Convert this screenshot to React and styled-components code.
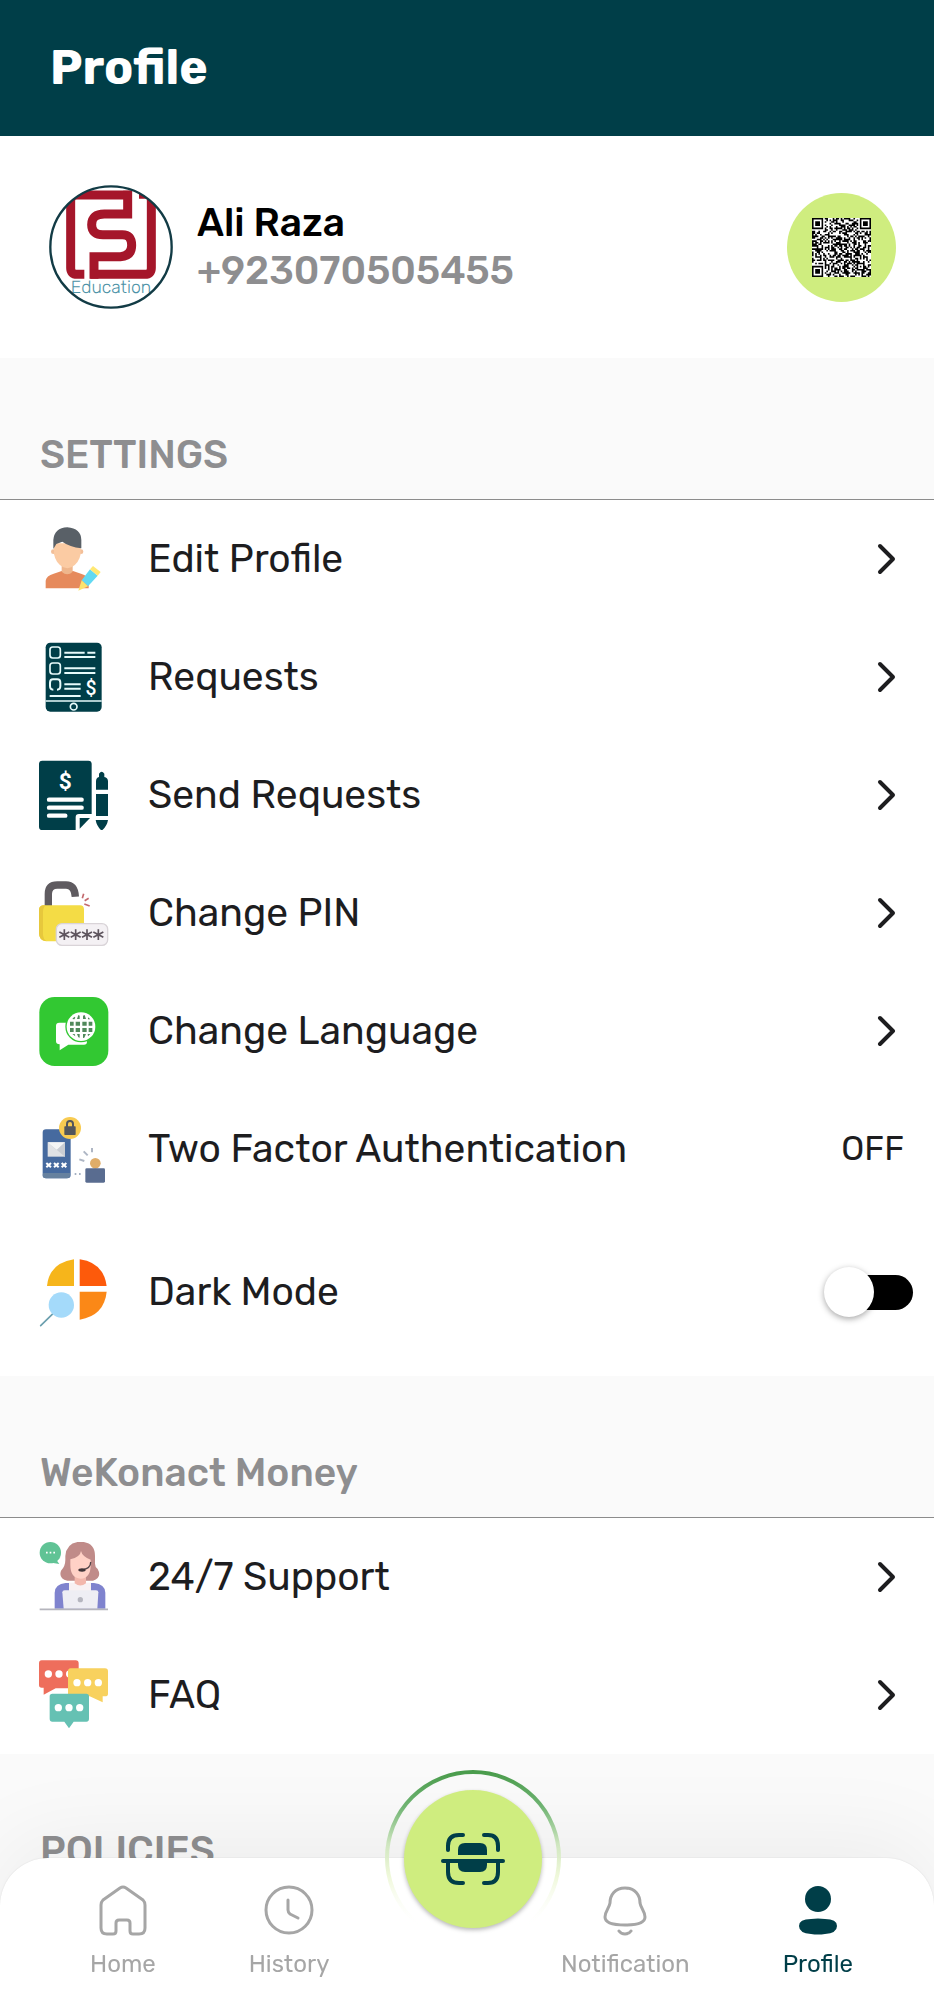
import React from "react";
import styled, { createGlobalStyle } from "styled-components";

const GlobalStyle = createGlobalStyle`
  * { box-sizing: border-box; }
  body {
    margin: 0;
    background: #fafafa;
    color: #1d1d1f;
    font-family: Rubik, Roboto, "Liberation Sans", sans-serif;
  }
  button { font: inherit; color: inherit; border: 0; background: none; padding: 0; cursor: pointer; }
  a { color: inherit; text-decoration: none; }
`;

const teal = "#003e48";
const lime = "#cfed7f";
const muted = "#8e8e90";

const Page = styled.div`
  min-height: 100vh;
  padding-bottom: 110px;
`;

const Header = styled.header`
  display: flex;
  align-items: center;
  height: 136px;
  padding: 0 50px;
  background: ${teal};
`;

const Title = styled.h1`
  margin: 0;
  color: #fff;
  font-size: 48px;
  line-height: 60px;
  font-weight: 700;
`;

const Account = styled.section`
  display: flex;
  align-items: center;
  gap: 24px;
  height: 222px;
  padding: 0 38px 0 49px;
  background: #fff;
`;

const Avatar = styled.svg`
  flex: none;
  width: 124px;
  height: 124px;
`;

const Person = styled.div`
  flex: 1;
  font-size: 39px;
  line-height: 48px;
  font-weight: 500;
`;

const Name = styled.div`
  color: #000;
`;

const Phone = styled.div`
  color: ${muted};
`;

const QrButton = styled.button`
  display: grid;
  place-items: center;
  width: 109px;
  height: 109px;
  border-radius: 50%;
  background: ${lime};
`;

const SectionTitle = styled.h2`
  display: flex;
  align-items: flex-end;
  height: 142px;
  margin: 0;
  padding: 0 40px 20px;
  border-bottom: 1px solid ${(p) => (p.$plain ? "transparent" : "#8c8c8c")};
  color: ${muted};
  font-size: 39px;
  line-height: 48px;
  font-weight: 500;
`;

const List = styled.div`
  background: #fff;
`;

const Row = styled.div`
  display: flex;
  align-items: center;
  gap: 39px;
  width: 100%;
  height: ${(p) => (p.$tall ? 168 : 118)}px;
  padding: 0 ${(p) => p.$end || 38}px 0 39px;
  text-align: left;
`;

const Icon = styled.svg`
  flex: none;
  width: 70px;
  height: 70px;
`;

const RowLabel = styled.span`
  flex: 1;
  font-size: 39px;
  line-height: 48px;
`;

const RowValue = styled.span`
  font-size: 34px;
  line-height: 40px;
`;

const ChevronSvg = styled.svg`
  flex: none;
  width: 20px;
  height: 32px;
`;

const Switch = styled.input`
  appearance: none;
  position: relative;
  flex: none;
  width: 89px;
  height: 50px;
  margin: 0;
  cursor: pointer;
  &::before {
    content: "";
    position: absolute;
    inset: 8px 0 7px 14px;
    border-radius: 18px;
    background: #000;
  }
  &::after {
    content: "";
    position: absolute;
    top: 0;
    left: 0;
    width: 50px;
    height: 50px;
    border-radius: 50%;
    background: #fff;
    box-shadow: 0 2px 6px rgba(0, 0, 0, 0.35);
  }
  &:checked::after { left: 39px; }
`;

const TabBar = styled.nav`
  position: fixed;
  left: 0;
  right: 0;
  bottom: 0;
  display: flex;
  justify-content: space-between;
  height: 149px;
  padding: 25px 81px 0 90px;
  border-radius: 48px 48px 0 0;
  background: #fff;
  box-shadow: 0 0 2px rgba(0, 0, 0, 0.12), 0 -16px 90px rgba(0, 0, 0, 0.06);
`;

const TabGroup = styled.div`
  display: flex;
  align-items: flex-start;
  gap: 93px;
`;

const Tab = styled.a`
  display: flex;
  flex-direction: column;
  align-items: center;
  gap: 11px;
  color: ${(p) => (p.$active ? teal : "#a6a6a6")};
  font-size: 24px;
  line-height: 32px;
`;

const TabIcon = styled.svg`
  width: 54px;
  height: 54px;
`;

const ScanButton = styled.button`
  position: absolute;
  top: -88px;
  left: 50%;
  margin-left: -82px;
  width: 176px;
  height: 176px;
  border-radius: 50%;
`;

const ScanSvg = styled.svg`
  display: block;
  width: 100%;
  height: 100%;
  overflow: visible;
`;

const ScanDisc = styled.circle`
  fill: ${lime};
  filter: drop-shadow(0 2px 2px rgba(0, 0, 0, 0.28));
`;

const Chevron = () => (
  <ChevronSvg viewBox="0 0 20 32" fill="none" stroke="#1d1d1f" strokeWidth="4" strokeLinecap="round" strokeLinejoin="round" aria-hidden="true">
    <path d="M4 3 17 16 4 29" />
  </ChevronSvg>
);

const QR_SIZE = 37;

function buildQr() {
  const finders = [[0, 0], [QR_SIZE - 7, 0], [0, QR_SIZE - 7]];
  let seed = 9230705;
  let d = "";
  for (let y = 0; y < QR_SIZE; y++) {
    for (let x = 0; x < QR_SIZE; x++) {
      seed = (seed * 1103515245 + 12345) % 2147483648;
      let on = (seed >> 12) % 100 < 52;
      finders.forEach(([fx, fy]) => {
        const ring = Math.max(Math.abs(x - fx - 3), Math.abs(y - fy - 3));
        if (ring <= 4) on = ring === 3 || ring <= 1;
      });
      const align = Math.max(Math.abs(x - 30), Math.abs(y - 30));
      if (align <= 2) on = align !== 1;
      if (on) d += `M${x} ${y}h1v1h-1z`;
    }
  }
  return d;
}

const qrPath = buildQr();

const QrCode = () => (
  <svg width="59" height="59" viewBox="0 0 37 37" aria-hidden="true">
    <path d="M0 0h37v37H0z" fill="#fff" />
    <path d={qrPath} fill="#000" />
  </svg>
);

const AvatarLogo = () => (
  <Avatar viewBox="56 43 372 372" role="img" aria-label="Education logo">
    <defs>
      <clipPath id="avatarClip"><circle cx="242" cy="229" r="183" /></clipPath>
    </defs>
    <circle cx="242" cy="229" r="183" fill="#fff" />
    <g clipPath="url(#avatarClip)">
      <g fill="none" stroke="#a5162a" strokeWidth="27">
        <path d="M292 60V130H222Q184 130 184 162T222 192H276Q304 192 304 224T270 258H191V324" />
        <path d="M305 73H140Q121 73 121 92V292Q121 311 140 311H162" />
        <path d="M326 71H345Q363 71 363 90V292Q363 311 344 311H180" />
      </g>
      <text x="242" y="368" textAnchor="middle" fontFamily="Rubik, Lato, sans-serif" fontWeight="300" fontSize="53" fill="#4c92a6" textRendering="geometricPrecision">Education</text>
    </g>
    <circle cx="242" cy="229" r="182" fill="none" stroke="#123b45" strokeWidth="7" />
  </Avatar>
);

const EditIcon = () => (
  <Icon viewBox="58 70 210 210" aria-hidden="true">
    <path d="M78 263V240Q80 225 102 219L126 211H160L184 219Q206 225 207 240V263Z" fill="#e68a5c" />
    <path d="M126 188H159V213Q143 228 126 213Z" fill="#efb68c" />
    <circle cx="101" cy="153" r="7" fill="#f3bf98" />
    <circle cx="184" cy="153" r="7" fill="#f3bf98" />
    <path d="M103 128H183V160Q178 188 155 200Q143 205 131 200Q108 188 103 160Z" fill="#fbcba3" />
    <path d="M101 145V118Q104 82 143 80Q184 83 185 118V143Q150 139 128 123L110 130Z" fill="#596067" />
    <path d="M186 239 211 206 234 225 205 257Z" fill="#62d9f2" />
    <path d="M211 206 220 196 243 214 234 225Z" fill="#ffe873" />
    <path d="M186 239 205 257 176 270Z" fill="#fbe36f" />
  </Icon>
);

const RequestsIcon = () => (
  <Icon viewBox="58 424 210 210" aria-hidden="true">
    <rect x="78" y="426" width="168" height="207" rx="14" fill={teal} />
    <g fill="none" stroke="#e7fbfb" strokeWidth="5">
      <rect x="91" y="439" width="31" height="33" rx="8" />
      <rect x="91" y="487" width="31" height="33" rx="8" />
      <path d="M101 567Q91 567 91 556V546Q91 536 100 536H113Q122 536 122 546V556Q122 567 112 567" strokeWidth="6" />
      <circle cx="162" cy="618" r="10" />
      <path d="M78 601H246" strokeWidth="4" />
    </g>
    <path d="M134 456H195M203 456H227M134 469H227M134 503H227M134 517H227M134 551H183M134 564H183M90 586H183" stroke="#e7fbfb" strokeWidth="6" />
    <text x="214" y="582" textAnchor="middle" fontFamily="Roboto, sans-serif" fontSize="58" fontWeight="500" fill="#fff">$</text>
  </Icon>
);

const SendIcon = () => (
  <Icon viewBox="58 58 210 210" aria-hidden="true">
    <path d="M68 60H206Q216 60 216 70V220H178Q168 220 168 230V268H68Q58 268 58 258V70Q58 60 68 60Z" fill={teal} />
    <path d="M180 232H211L180 264Z" fill={teal} />
    <path d="M88 177H186M88 201H186M88 225H137" stroke="#fff" strokeWidth="13" strokeLinecap="round" />
    <text x="137" y="146" textAnchor="middle" fontFamily="Roboto, sans-serif" fontSize="68" fontWeight="700" fill="#fff">$</text>
    <path d="M229 147V122Q229 111 238 109V99Q246 88 254 99V109Q265 111 265 122V147ZM229 160H265V226H229ZM228 238H265Q262 257 246 270Q231 257 228 238Z" fill={teal} />
  </Icon>
);

const PinIcon = () => (
  <Icon viewBox="58 412 210 210" aria-hidden="true">
    <path d="M86 496V460Q86 433 113 433H139Q165 433 167 468" fill="none" stroke="#5f5b60" strokeWidth="22" />
    <path d="M70 494H181Q193 494 193 507V590Q193 602 181 602H80Q58 600 58 578V507Q58 496 70 494Z" fill="#f4dc45" />
    <path d="M70 494H78Q70 500 70 514V584Q71 596 80 602Q58 600 58 578V507Q58 496 70 494Z" fill="#e7c83c" />
    <path d="M188 473 192 459M195 480 207 473M194 490 210 496" stroke="#c36a6e" strokeWidth="5" />
    <rect x="110" y="549" width="154" height="65" rx="17" fill="#f4f1f4" stroke="#d9d4d8" strokeWidth="4" />
    {[134, 168, 202, 236].map((x) => (
      <path key={x} d={`M${x} 566V598M${x - 15} 574L${x + 15} 590M${x + 15} 574L${x - 15} 590`} stroke="#5d545d" strokeWidth="5" />
    ))}
  </Icon>
);

const LanguageIcon = () => (
  <Icon viewBox="58 46 210 210" aria-hidden="true">
    <rect x="59" y="49" width="207" height="207" rx="46" fill="#32c832" />
    <path d="M119 126H193Q202 126 202 135V183Q202 192 193 192H146L120 209V191Q109 191 109 182V135Q109 126 119 126Z" fill="#fff" />
    <circle cx="184" cy="138" r="47" fill="#32c832" />
    <circle cx="184" cy="138" r="43" fill="#fff" />
    <path d="M151 123h11v12h-11zM168 123h13v12h-13zM188 123h13v12h-13zM207 123h11v12h-11zM151 142h11v12h-11zM168 142h13v12h-13zM188 142h13v12h-13zM207 142h11v12h-11zM172 115l4-12 4 2v10zM190 105l5-2 4 12h-9zM172 160h8v11l-4-1zM190 160h9l-5 11-4 1zM158 115l6-7 3 3-3 5zM205 110l7 6h-7zM158 160h7l2 7zM204 160h8l-7 7z" fill="#50895b" />
  </Icon>
);

const TwoFactorIcon = () => (
  <Icon viewBox="58 400 210 210" aria-hidden="true">
    <rect x="69" y="446" width="84" height="147" rx="10" fill="#466a9f" />
    <path d="M71 577H151V583Q151 593 141 593H79Q69 593 69 583Z" fill="#66819f" />
    <rect x="84" y="485" width="52" height="43" fill="#e0e2e5" />
    <path d="M84 485H136L110 509Z" fill="#f4f5f5" />
    <path d="M84 485 110 509 136 485V528Z" fill="#c9cdd3" />
    {[87, 110, 133].map((x) => (
      <path key={x} d={`M${x - 7} 547l14 13m0-13l-14 13`} stroke="#fff" strokeWidth="6" />
    ))}
    <circle cx="151" cy="442" r="33" fill="#f8cb51" />
    <rect x="134" y="437" width="34" height="26" rx="2" fill="#52565c" />
    <path d="M142 439V430Q142 421 151 421T160 430V439" fill="none" stroke="#52565c" strokeWidth="6" />
    <path d="M217 515V502M204 524 192 512M194 541 179 536" stroke="#aeb6c4" strokeWidth="6" />
    <path d="M165 580h5M178 580h5" stroke="#8797ae" strokeWidth="5" />
    <circle cx="227" cy="548" r="16" fill="#dfad69" />
    <rect x="197" y="563" width="59" height="43" rx="4" fill="#596c90" />
  </Icon>
);

const DarkModeIcon = () => (
  <Icon viewBox="58 49 210 210" aria-hidden="true">
    <path d="M163 56V136H82Q88 68 163 56Z" fill="#f6b51b" />
    <path d="M180 56Q252 66 261 136H180Z" fill="#fd5a0b" />
    <path d="M180 153H261Q254 224 180 237Z" fill="#fb8817" />
    <path d="M63 255 100 219" stroke="#6b9fae" strokeWidth="5" strokeLinecap="round" />
    <circle cx="125" cy="193" r="38" fill="#a4dafa" />
  </Icon>
);

const SupportIcon = () => (
  <Icon viewBox="58 70 210 210" aria-hidden="true">
    <circle cx="92" cy="102" r="32" fill="#60c395" />
    <path d="M96 132 124 116 111 125 119 136Z" fill="#60c395" />
    <path d="M79 102h5M90 102h5M101 102h5" stroke="#fff" strokeWidth="5" />
    <path d="M183 69Q226 71 226 112V135Q226 145 234 151Q248 176 220 186H143Q116 180 124 156Q137 143 137 124V112Q140 71 183 69Z" fill="#c08b89" />
    <path d="M105 270V222Q106 196 138 193H223Q256 196 257 222V270Z" fill="#7f83ce" />
    <path d="M148 192H214V218H148Z" fill="#f8f1f3" />
    <path d="M165 166H199V194Q182 207 165 194Z" fill="#f3b7ac" />
    <path d="M152 122Q182 115 184 97Q188 114 213 123V139Q213 179 183 180Q152 178 152 139Z" fill="#ffd1c6" />
    <path d="M213 130Q213 149 190 153" fill="none" stroke="#524549" strokeWidth="4" />
    <ellipse cx="187" cy="154" rx="11" ry="5" fill="#403438" />
    <path d="M128 221Q128 215 135 215H229Q236 215 236 221L233 270H132Z" fill="#eeeef4" />
    <circle cx="182" cy="243" r="8" fill="#b5b6bf" />
    <path d="M60 272H265" stroke="#b5b5bd" strokeWidth="5" />
  </Icon>
);

const FaqIcon = () => (
  <Icon viewBox="58 424 210 210" aria-hidden="true">
    <path d="M66 425H168Q177 425 177 434V509H108L72 528V507H66Q58 507 58 499V434Q58 425 66 425Z" fill="#ee6e5c" />
    <g fill="#fff"><circle cx="86" cy="466" r="11" /><circle cx="118" cy="466" r="11" /><circle cx="150" cy="466" r="11" /></g>
    <path d="M153 449H256Q265 449 265 458V525Q265 533 256 533H249V551L210 533H145V458Q145 449 153 449Z" fill="#f8d15e" />
    <g fill="#fff"><circle cx="172" cy="492" r="11" /><circle cx="204" cy="492" r="11" /><circle cx="236" cy="492" r="11" /></g>
    <path d="M98 525H200Q208 525 208 533V600Q208 609 200 609H162L148 629 134 609H98Q90 609 90 600V533Q90 525 98 525Z" fill="#65c1b3" />
    <g fill="#fff"><circle cx="116" cy="567" r="11" /><circle cx="148" cy="567" r="11" /><circle cx="180" cy="567" r="11" /></g>
  </Icon>
);

const tabStroke = { fill: "none", stroke: "currentColor", strokeWidth: 3, strokeLinecap: "round", strokeLinejoin: "round" };

const HomeIcon = () => (
  <TabIcon viewBox="0 0 54 54" {...tabStroke} aria-hidden="true">
    <path d="M24 5Q27 3 30 5L47 17Q49 19 49 22V45Q49 51 43 51H37Q34 51 34 48V40Q34 37 31 37H23Q20 37 20 40V48Q20 51 17 51H11Q5 51 5 45V22Q5 19 7 17Z" />
  </TabIcon>
);

const HistoryIcon = () => (
  <TabIcon viewBox="0 0 54 54" {...tabStroke} aria-hidden="true">
    <circle cx="27" cy="27" r="23" />
    <path d="M26 17V27Q26 29 28 31L36 35" />
  </TabIcon>
);

const BellIcon = () => (
  <TabIcon viewBox="0 0 54 54" {...tabStroke} aria-hidden="true">
    <path d="M27 5C17 5 12 12 12 20C11 26 7 28 7 34C7 38 11 42 27 42S47 38 47 34C47 28 43 26 42 20C42 12 37 5 27 5Z" />
    <path d="M21 48Q23 51 27 51T33 48" />
  </TabIcon>
);

const ProfileIcon = () => (
  <TabIcon viewBox="0 0 54 54" fill="currentColor" aria-hidden="true">
    <circle cx="27" cy="16" r="13" />
    <path d="M8 43Q8 36 20 36Q27 35 34 36Q46 36 46 43T34 51Q27 52 20 51Q8 50 8 43Z" />
  </TabIcon>
);

const ScanIcon = () => (
  <ScanSvg viewBox="0 0 176 176" aria-hidden="true">
    <defs>
      <linearGradient id="ring" x1="0" y1="0" x2="0" y2="1">
        <stop offset="0" stopColor="#4a9c4c" />
        <stop offset="0.2" stopColor="#6fb372" />
        <stop offset="0.42" stopColor="#cfe6c0" />
        <stop offset="0.6" stopColor="#eaf6cf" stopOpacity="0.8" />
        <stop offset="0.9" stopColor="#fff" stopOpacity="0" />
      </linearGradient>
    </defs>
    <circle cx="88" cy="88" r="86" fill="none" stroke="url(#ring)" strokeWidth="4" />
    <ScanDisc cx="88" cy="89" r="69" />
    <g fill="none" stroke={teal} strokeWidth="4" strokeLinecap="round">
      <path d="M63 80V76Q63 65 74 65H78M99 65H103Q113 65 113 76V80M63 92V102Q63 113 74 113H78M99 113H103Q113 113 113 102V92" />
      <path d="M58 91H118" />
    </g>
    <path d="M73 85V80Q73 73 80 73H95Q102 73 102 80V85ZM73 93H102V95Q102 102 95 102H80Q73 102 73 95Z" fill={teal} />
  </ScanSvg>
);

const settings = [
  { label: "Edit Profile", icon: EditIcon },
  { label: "Requests", icon: RequestsIcon },
  { label: "Send Requests", icon: SendIcon },
  { label: "Change PIN", icon: PinIcon },
  { label: "Change Language", icon: LanguageIcon },
];

const company = [
  { label: "24/7 Support", icon: SupportIcon },
  { label: "FAQ", icon: FaqIcon },
];

const LinkRow = ({ label, icon: ItemIcon }) => (
  <Row as="a" href="#">
    <ItemIcon />
    <RowLabel>{label}</RowLabel>
    <Chevron />
  </Row>
);

export default function App() {
  return (
    <>
      <GlobalStyle />
      <Page>
        <Header>
          <Title>Profile</Title>
        </Header>
        <main>
          <Account>
            <AvatarLogo />
            <Person>
              <Name>Ali Raza</Name>
              <Phone>+923070505455</Phone>
            </Person>
            <QrButton type="button" aria-label="Show QR code">
              <QrCode />
            </QrButton>
          </Account>

          <SectionTitle>SETTINGS</SectionTitle>
          <List>
            {settings.map((item) => <LinkRow key={item.label} {...item} />)}
            <Row as="button" type="button" $end={30}>
              <TwoFactorIcon />
              <RowLabel>Two Factor Authentication</RowLabel>
              <RowValue>OFF</RowValue>
            </Row>
            <Row as="label" htmlFor="dark-mode" $tall $end={21}>
              <DarkModeIcon />
              <RowLabel>Dark Mode</RowLabel>
              <Switch id="dark-mode" type="checkbox" role="switch" />
            </Row>
          </List>

          <SectionTitle>WeKonact Money</SectionTitle>
          <List>
            {company.map((item) => <LinkRow key={item.label} {...item} />)}
          </List>

          <SectionTitle $plain>POLICIES</SectionTitle>
        </main>
      </Page>
      <TabBar>
        <TabGroup>
          <Tab href="#"><HomeIcon />Home</Tab>
          <Tab href="#"><HistoryIcon />History</Tab>
        </TabGroup>
        <TabGroup>
          <Tab href="#"><BellIcon />Notification</Tab>
          <Tab href="#" $active aria-current="page"><ProfileIcon />Profile</Tab>
        </TabGroup>
        <ScanButton type="button" aria-label="Scan"><ScanIcon /></ScanButton>
      </TabBar>
    </>
  );
}
